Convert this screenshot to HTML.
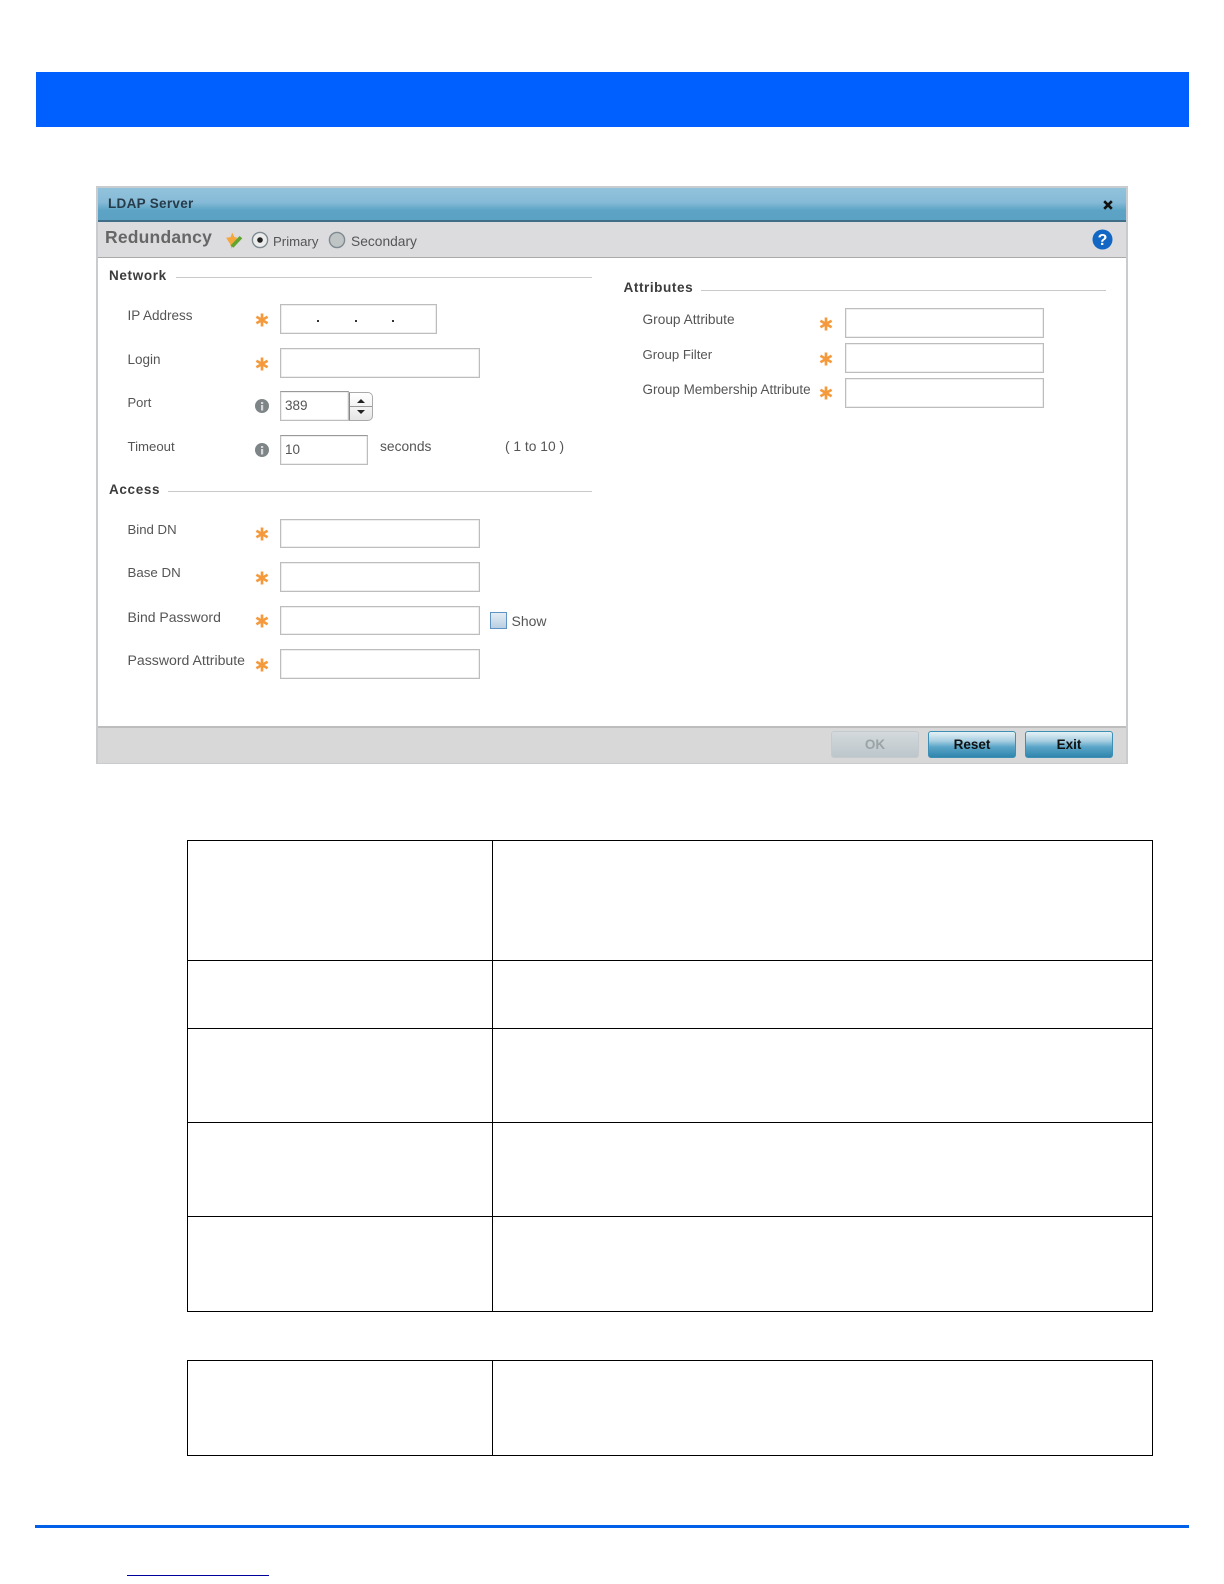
<!DOCTYPE html>
<html><head><meta charset="utf-8"><style>
html,body{margin:0;padding:0;background:#fff}
#p{position:relative;width:1224px;height:1584px;overflow:hidden;background:#fff;font-family:"Liberation Sans",sans-serif}
#p div,#p svg,#p span{position:absolute}
.t{font-size:13.5px;line-height:16px;color:#555;white-space:nowrap;filter:blur(.3px)}
.h{font-size:13.5px;line-height:16px;font-weight:bold;color:#3c3c3c;white-space:nowrap;letter-spacing:.65px;filter:blur(.3px)}
.i{box-sizing:border-box;background:#fff;border:1px solid #bdbdbd;box-shadow:inset 0 0 0 .5px #ddd}
.l{height:1px;background:#c9c9c9}
.k{background:#000}
.b{box-sizing:border-box;top:730.5px;height:27px;width:88px;border-radius:3px;border:1px solid #3d8fb5;background:linear-gradient(#e6f1f6 0,#a9d0e2 35%,#5aa5c8 60%,#2f86ad 100%);font-size:13.5px;font-weight:bold;line-height:25px;text-align:center;color:#111;filter:blur(.25px)}
</style></head><body><div id="p">
<div style="left:36px;top:72px;width:1153px;height:55px;background:#0060ff"></div>

<div style="left:96px;top:186px;width:1032px;height:578px;box-sizing:border-box;background:#fff;border:2px solid #c8cccf;border-top-width:2px;filter:blur(.3px)"></div>
<div style="left:98px;top:188px;width:1028px;height:32px;background:linear-gradient(#92c3dc 0,#86bad6 45%,#5ca3c5 70%,#5ca2c4 100%);border-bottom:2px solid #3f6f88"></div>
<div style="left:98px;top:222px;width:1028px;height:35px;background:#dcdbde;border-bottom:1px solid #aaa"></div>
<div class="h" style="left:108px;top:196px;color:#263c4a;font-size:13.5px;letter-spacing:.3px">LDAP Server</div>
<svg style="left:1102px;top:199px" width="12" height="12" viewBox="0 0 12 12"><path d="M2.2 2.2L9.8 9.8M9.8 2.2L2.2 9.8" stroke="#111" stroke-width="2.6"/></svg>
<div style="left:105px;top:227px;font-size:17.5px;line-height:20px;font-weight:bold;color:#666;letter-spacing:.2px;white-space:nowrap;filter:blur(.3px)">Redundancy</div>
<svg style="left:225px;top:231px" width="19" height="19" viewBox="0 0 17 17"><path d="M1 6L5 5.5 6.5 1.5 8.5 5.5 11 6 7 12 6 16 4.5 11.5Z" fill="#f5a63c"/><path d="M5 13L13 4.5 15.5 6.5 7.5 15Z" fill="#5fa52e"/></svg>
<svg style="left:251px;top:231px" width="18" height="18" viewBox="0 0 18 18"><circle cx="9" cy="9" r="7.6" fill="#ececec" stroke="#7d8a8f" stroke-width="1.4"/><circle cx="9" cy="9" r="2.8" fill="#222"/></svg>
<div class="t" style="left:273px;top:234px;font-size:13.2px">Primary</div>
<svg style="left:328px;top:231px" width="18" height="18" viewBox="0 0 18 18"><circle cx="9" cy="9" r="7.6" fill="#bfc4c4" stroke="#7d8a8f" stroke-width="1.4"/></svg>
<div class="t" style="left:351px;top:234px;font-size:13.8px">Secondary</div>
<svg style="left:1092px;top:229px" width="21" height="21" viewBox="0 0 21 21"><circle cx="10.5" cy="10.5" r="10" fill="#1266c4"/><text x="10.5" y="16" font-family="Liberation Sans" font-size="16" font-weight="bold" fill="#fff" text-anchor="middle">?</text></svg>

<div class="h" style="left:109px;top:268px">Network</div><div class="l" style="left:176px;top:277px;width:416px"></div>
<div class="t" style="left:127.5px;top:308px">IP Address</div><div class="i" style="left:280px;top:304px;width:157px;height:30px"></div>
<div style="left:317px;top:320px;width:2px;height:2px;background:#333"></div><div style="left:355px;top:320px;width:2px;height:2px;background:#333"></div><div style="left:392px;top:320px;width:2px;height:2px;background:#333"></div>
<div class="t" style="left:127.5px;top:352px">Login</div><div class="i" style="left:280px;top:348px;width:199.5px;height:30px"></div>
<div class="t" style="left:127.5px;top:395px;font-size:13px">Port</div><div class="i" style="left:280px;top:391px;width:68.5px;height:30px;border-top-color:#999"></div>
<div style="left:349px;top:392px;width:24px;height:29px;box-sizing:border-box;border:1px solid #aaa;border-left-color:#888;border-radius:0 5px 5px 0;background:linear-gradient(#fff 0,#f4f4f4 48%,#999 48%,#999 52%,#f4f4f4 52%,#e4e4e4 100%)"></div>
<svg style="left:355px;top:397px" width="12" height="20" viewBox="0 0 12 20"><path d="M2 6L6 2 10 6Z M2 13L10 13 6 17Z" fill="#222"/></svg>
<div class="t" style="left:285px;top:398px">389</div>
<div class="t" style="left:127.5px;top:439px;font-size:13.2px">Timeout</div><div class="i" style="left:280px;top:435px;width:87.5px;height:30px;border-top-color:#999"></div>
<div class="t" style="left:285px;top:442px">10</div>
<div class="t" style="left:380px;top:439px;font-size:13.8px">seconds</div><div class="t" style="left:505px;top:439px;font-size:13.8px">( 1 to 10 )</div>
<svg style="left:255px;top:399px" width="14" height="14" viewBox="0 0 14 14"><circle cx="7" cy="7" r="7" fill="#7d8587"/><rect x="6" y="6" width="2.2" height="5.5" fill="#d8d8d8"/><rect x="6" y="3" width="2.2" height="2" fill="#d8d8d8"/></svg>
<svg style="left:255px;top:443px" width="14" height="14" viewBox="0 0 14 14"><circle cx="7" cy="7" r="7" fill="#7d8587"/><rect x="6" y="6" width="2.2" height="5.5" fill="#d8d8d8"/><rect x="6" y="3" width="2.2" height="2" fill="#d8d8d8"/></svg>

<div class="h" style="left:109px;top:482px">Access</div><div class="l" style="left:168px;top:491px;width:424px"></div>
<div class="t" style="left:127.5px;top:522px;font-size:13.2px">Bind DN</div><div class="i" style="left:280px;top:519px;width:199.5px;height:29px"></div>
<div class="t" style="left:127.5px;top:565px;font-size:13.3px">Base DN</div><div class="i" style="left:280px;top:562px;width:199.5px;height:30px"></div>
<div class="t" style="left:127.5px;top:609px;font-size:14px">Bind Password</div><div class="i" style="left:280px;top:606px;width:199.5px;height:29px"></div>
<div class="t" style="left:127.5px;top:652px;font-size:14.1px">Password Attribute</div><div class="i" style="left:280px;top:649px;width:199.5px;height:30px"></div>
<div style="left:490px;top:612px;width:17px;height:17px;box-sizing:border-box;border:1px solid #5f93c4;background:linear-gradient(#e4ecf4,#b9cfe3)"></div>
<div class="t" style="left:511.5px;top:613px;font-size:14px">Show</div>

<div class="h" style="left:623.5px;top:280px;font-size:13.6px;letter-spacing:.55px">Attributes</div><div class="l" style="left:701px;top:290px;width:405px"></div>
<div class="t" style="left:642.5px;top:312px;font-size:13.7px">Group Attribute</div><div class="i" style="left:845px;top:308px;width:199px;height:30px"></div>
<div class="t" style="left:642.5px;top:347px;font-size:13.2px">Group Filter</div><div class="i" style="left:845px;top:343px;width:199px;height:30px"></div>
<div class="t" style="left:642.5px;top:382px;font-size:13.45px">Group Membership Attribute</div><div class="i" style="left:845px;top:378px;width:199px;height:30px"></div>

<svg style="left:254.5px;top:312.5px" width="14" height="14" viewBox="0 0 13 13"><path d="M6.5 .5V12.5M1.3 3.5L11.7 9.5M11.7 3.5L1.3 9.5" stroke="#f59a3c" stroke-width="2.5"/></svg>
<svg style="left:254.5px;top:356.5px" width="14" height="14" viewBox="0 0 13 13"><path d="M6.5 .5V12.5M1.3 3.5L11.7 9.5M11.7 3.5L1.3 9.5" stroke="#f59a3c" stroke-width="2.5"/></svg>
<svg style="left:254.5px;top:526.5px" width="14" height="14" viewBox="0 0 13 13"><path d="M6.5 .5V12.5M1.3 3.5L11.7 9.5M11.7 3.5L1.3 9.5" stroke="#f59a3c" stroke-width="2.5"/></svg>
<svg style="left:254.5px;top:570.5px" width="14" height="14" viewBox="0 0 13 13"><path d="M6.5 .5V12.5M1.3 3.5L11.7 9.5M11.7 3.5L1.3 9.5" stroke="#f59a3c" stroke-width="2.5"/></svg>
<svg style="left:254.5px;top:613.5px" width="14" height="14" viewBox="0 0 13 13"><path d="M6.5 .5V12.5M1.3 3.5L11.7 9.5M11.7 3.5L1.3 9.5" stroke="#f59a3c" stroke-width="2.5"/></svg>
<svg style="left:254.5px;top:657.5px" width="14" height="14" viewBox="0 0 13 13"><path d="M6.5 .5V12.5M1.3 3.5L11.7 9.5M11.7 3.5L1.3 9.5" stroke="#f59a3c" stroke-width="2.5"/></svg>
<svg style="left:819px;top:316.5px" width="14" height="14" viewBox="0 0 13 13"><path d="M6.5 .5V12.5M1.3 3.5L11.7 9.5M11.7 3.5L1.3 9.5" stroke="#f59a3c" stroke-width="2.5"/></svg>
<svg style="left:819px;top:351.5px" width="14" height="14" viewBox="0 0 13 13"><path d="M6.5 .5V12.5M1.3 3.5L11.7 9.5M11.7 3.5L1.3 9.5" stroke="#f59a3c" stroke-width="2.5"/></svg>
<svg style="left:819px;top:385.5px" width="14" height="14" viewBox="0 0 13 13"><path d="M6.5 .5V12.5M1.3 3.5L11.7 9.5M11.7 3.5L1.3 9.5" stroke="#f59a3c" stroke-width="2.5"/></svg>

<div style="left:98px;top:725.5px;width:1028px;height:37px;box-sizing:border-box;background:#d8d8d8;border-top:2px solid #bdbdbd"></div>
<div class="b" style="left:831px;border-color:#c4cbce;background:linear-gradient(#d3d9dc,#bcc6cb);color:#9aa3a7">OK</div>
<div class="b" style="left:928px">Reset</div>
<div class="b" style="left:1025px">Exit</div>

<div class="k" style="left:187px;top:840px;width:966px;height:1.4px"></div>
<div class="k" style="left:187px;top:960px;width:966px;height:1.4px"></div>
<div class="k" style="left:187px;top:1028px;width:966px;height:1.4px"></div>
<div class="k" style="left:187px;top:1122px;width:966px;height:1.4px"></div>
<div class="k" style="left:187px;top:1216px;width:966px;height:1.4px"></div>
<div class="k" style="left:187px;top:1311px;width:966px;height:1.4px"></div>
<div class="k" style="left:187px;top:840px;width:1.4px;height:472px"></div>
<div class="k" style="left:492px;top:840px;width:1.4px;height:472px"></div>
<div class="k" style="left:1152px;top:840px;width:1.4px;height:472px"></div>

<div class="k" style="left:187px;top:1359.5px;width:966px;height:1.4px"></div>
<div class="k" style="left:187px;top:1454.5px;width:966px;height:1.4px"></div>
<div class="k" style="left:187px;top:1359.5px;width:1.4px;height:96px"></div>
<div class="k" style="left:492px;top:1359.5px;width:1.4px;height:96px"></div>
<div class="k" style="left:1152px;top:1359.5px;width:1.4px;height:96px"></div>

<div style="left:35px;top:1525px;width:1154px;height:3px;background:#0060e8"></div>
<div style="left:127px;top:1575px;width:142px;height:1px;background:#00009a"></div>
</div></body></html>
